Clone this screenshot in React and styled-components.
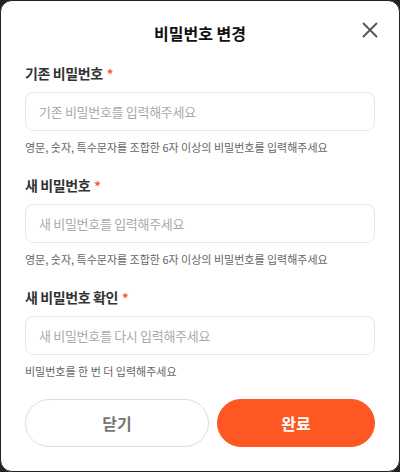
import React from 'react';
import styled, { createGlobalStyle } from 'styled-components';

const GlobalStyle = createGlobalStyle`
  * { box-sizing: border-box; }
  html, body { margin: 0; padding: 0; background: #222; }
  body {
    font-family: "Noto Sans CJK KR", "Noto Sans", sans-serif;
    -webkit-font-smoothing: antialiased;
  }
`;

const Modal = styled.div`
  width: 400px;
  height: 472px;
  background: #fff;
  border: 1px solid #222;
  border-radius: 12px;
  display: flex;
  flex-direction: column;
  overflow: hidden;
`;

const Header = styled.div`
  height: 62px;
  display: grid;
  grid-template-columns: 24px 1fr 24px;
  align-items: start;
  padding: 21px 17px 0;
`;

const Title = styled.h2`
  grid-column: 2;
  margin: 0;
  text-align: center;
  font-size: 16px;
  font-weight: 700;
  line-height: 22px;
  color: #111;
`;

const CloseButton = styled.button`
  grid-column: 3;
  width: 24px;
  height: 24px;
  margin-top: -4px;
  padding: 0;
  border: none;
  background: none;
  display: flex;
  align-items: center;
  justify-content: center;
  cursor: pointer;
`;

const Body = styled.div`
  flex: 1;
  display: flex;
  flex-direction: column;
  gap: 19px;
  padding: 0 24px;
`;

const Field = styled.div`
  display: flex;
  flex-direction: column;
`;

const Label = styled.label`
  font-size: 14px;
  font-weight: 600;
  line-height: 20px;
  letter-spacing: -0.4px;
  color: #333;
  margin-bottom: 8px;
`;

const Required = styled.span`
  color: #ff5722;
  font-size: 13px;
  margin-left: 4px;
`;

const Input = styled.input`
  height: 39px;
  border: 1px solid #e6e6e6;
  border-radius: 8px;
  padding: 0 13px;
  font-family: inherit;
  font-size: 13px;
  letter-spacing: -0.3px;
  color: #333;
  outline: none;
  &::placeholder { color: #aaa; }
`;

const Helper = styled.p`
  margin: 7px 0 0;
  font-size: 11px;
  line-height: 18px;
  color: #666;
`;

const Actions = styled.div`
  display: grid;
  grid-template-columns: 184fr 158fr;
  gap: 8px;
  padding: 0 24px 24px;
`;

const Button = styled.button`
  height: 48px;
  border-radius: 24px;
  font-family: inherit;
  font-size: 16px;
  font-weight: 700;
  cursor: pointer;
  border: 1px solid ${p => (p.$primary ? '#ff5722' : '#dddddd')};
  background: ${p => (p.$primary ? '#ff5722' : '#fff')};
  color: ${p => (p.$primary ? '#fff' : '#777')};
`;

const fields = [
  {
    label: '기존 비밀번호',
    placeholder: '기존 비밀번호를 입력해주세요',
    help: '영문, 숫자, 특수문자를 조합한 6자 이상의 비밀번호를 입력해주세요',
  },
  {
    label: '새 비밀번호',
    placeholder: '새 비밀번호를 입력해주세요',
    help: '영문, 숫자, 특수문자를 조합한 6자 이상의 비밀번호를 입력해주세요',
  },
  {
    label: '새 비밀번호 확인',
    placeholder: '새 비밀번호를 다시 입력해주세요',
    help: '비밀번호를 한 번 더 입력해주세요',
  },
];

export default function App() {
  return (
    <>
      <GlobalStyle />
      <Modal>
        <Header>
          <Title>비밀번호 변경</Title>
          <CloseButton aria-label="닫기">
            <svg width="16" height="16" viewBox="0 0 16 16">
              <path d="M1.5 1.5 L14.5 14.5 M14.5 1.5 L1.5 14.5" stroke="#555" strokeWidth="1.8" strokeLinecap="round" />
            </svg>
          </CloseButton>
        </Header>
        <Body>
          {fields.map(f => (
            <Field key={f.label}>
              <Label>
                {f.label}
                <Required>*</Required>
              </Label>
              <Input type="password" placeholder={f.placeholder} />
              <Helper>{f.help}</Helper>
            </Field>
          ))}
        </Body>
        <Actions>
          <Button>닫기</Button>
          <Button $primary>완료</Button>
        </Actions>
      </Modal>
    </>
  );
}
